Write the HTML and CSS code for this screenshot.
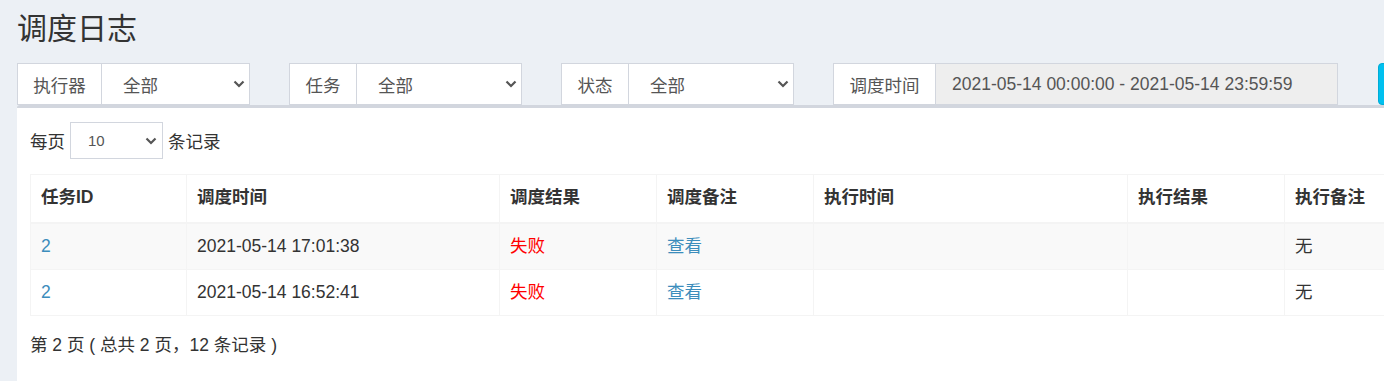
FILE: index.html
```html
<!DOCTYPE html>
<html>
<head>
    <meta charset="UTF-8">
    <title>调度日志</title>
    <link rel="stylesheet" href="styles.css">
</head>
<body>

<section class="content-header">
    <h1>调度日志</h1>
</section>

<section class="content">
    <div class="filter-row">
        <div class="input-group">
            <span class="addon addon-3">执行器</span>
            <div class="select">
                <span>全部</span>
                <svg class="caret" width="12" height="8" viewBox="0 0 12 8"><path d="M1.5 1.5 L6 6 L10.5 1.5" fill="none" stroke="#555" stroke-width="2.2"/></svg>
            </div>
        </div>
        <div class="input-group">
            <span class="addon addon-2">任务</span>
            <div class="select">
                <span>全部</span>
                <svg class="caret" width="12" height="8" viewBox="0 0 12 8"><path d="M1.5 1.5 L6 6 L10.5 1.5" fill="none" stroke="#555" stroke-width="2.2"/></svg>
            </div>
        </div>
        <div class="input-group">
            <span class="addon addon-2">状态</span>
            <div class="select">
                <span>全部</span>
                <svg class="caret" width="12" height="8" viewBox="0 0 12 8"><path d="M1.5 1.5 L6 6 L10.5 1.5" fill="none" stroke="#555" stroke-width="2.2"/></svg>
            </div>
        </div>
        <div class="input-group input-group-wide">
            <span class="addon addon-4">调度时间</span>
            <div class="date-input">2021-05-14 00:00:00 - 2021-05-14 23:59:59</div>
        </div>
        <button class="btn-search" aria-label="搜索"></button>
    </div>

    <div class="box">
        <div class="length">
            <span>每页</span>
            <div class="select select-sm">
                <span>10</span>
                <svg class="caret" width="12" height="8" viewBox="0 0 12 8"><path d="M1.5 1.5 L6 6 L10.5 1.5" fill="none" stroke="#555" stroke-width="2.2"/></svg>
            </div>
            <span>条记录</span>
        </div>

        <table class="log-table">
            <colgroup>
                <col class="w-id"><col class="w-l"><col class="w-s"><col class="w-s"><col class="w-xl"><col class="w-s"><col class="w-s">
            </colgroup>
            <thead>
                <tr>
                    <th>任务ID</th>
                    <th>调度时间</th>
                    <th>调度结果</th>
                    <th>调度备注</th>
                    <th>执行时间</th>
                    <th>执行结果</th>
                    <th>执行备注</th>
                </tr>
            </thead>
            <tbody>
                <tr>
                    <td><a href="#">2</a></td>
                    <td>2021-05-14 17:01:38</td>
                    <td class="fail">失败</td>
                    <td><a href="#">查看</a></td>
                    <td></td>
                    <td></td>
                    <td>无</td>
                </tr>
                <tr>
                    <td><a href="#">2</a></td>
                    <td>2021-05-14 16:52:41</td>
                    <td class="fail">失败</td>
                    <td><a href="#">查看</a></td>
                    <td></td>
                    <td></td>
                    <td>无</td>
                </tr>
            </tbody>
        </table>

        <div class="info">第 2 页 ( 总共 2 页，12 条记录 )</div>
    </div>
</section>

</body>
</html>
```

FILE: styles.css
```css
body {
    margin: 0;
    background: #ecf0f5;
    font-family: "Liberation Sans", "Noto Sans CJK SC", sans-serif;
    font-size: 17.5px;
    color: #333;
    overflow: hidden;
}

.content-header {
    padding: 12px 17px 0;
}
.content-header h1 {
    margin: 0;
    font-size: 30px;
    font-weight: normal;
    line-height: 34px;
    color: #333;
}

.content {
    padding: 17px 0 0 17px;
}

/* filter bar */
.filter-row {
    display: flex;
    gap: 39px;
    width: max-content;
}
.input-group {
    display: flex;
    width: 233px;
    height: 42px;
    color: #555;
}
.input-group-wide {
    width: 505px;
}
.addon {
    box-sizing: border-box;
    flex: none;
    display: flex;
    align-items: center;
    justify-content: center;
    background: #fff;
    border: 1px solid #d2d6de;
    border-right: none;
}
.addon-3 { width: 84px; }
.addon-2 { width: 67px; }
.addon-4 { width: 102px; }

.select {
    box-sizing: border-box;
    flex: 1;
    display: flex;
    align-items: center;
    justify-content: space-between;
    padding: 0 4px 0 21px;
    background: #fff;
    border: 1px solid #d2d6de;
    color: #555;
}
.caret {
    display: block;
}
.date-input {
    box-sizing: border-box;
    flex: 1;
    display: flex;
    align-items: center;
    padding-left: 16px;
    background: #eee;
    border: 1px solid #d2d6de;
    color: #555;
}
.btn-search {
    flex: none;
    width: 80px;
    height: 42px;
    margin-left: 1px;
    background: #00c0ef;
    border: 1px solid #00acd6;
    border-radius: 4px;
}

/* box */
.box {
    width: 1600px;
    background: #fff;
    border-top: 3px solid #d2d6de;
    border-radius: 3px 0 0 0;
    padding: 14px 13px 30px;
}

.length {
    display: flex;
    align-items: center;
    gap: 5px;
    height: 37px;
}
.select-sm {
    flex: none;
    width: 93px;
    height: 37px;
    padding: 0 5px 0 17px;
    font-size: 15px;
}

.log-table {
    margin-top: 15px;
    border-collapse: collapse;
    table-layout: fixed;
    width: 1411px;
    border: 1px solid #f4f4f4;
}
.w-id { width: 156px; }
.w-s { width: 157px; }
.w-l { width: 313px; }
.w-xl { width: 314px; }
.log-table th, .log-table td {
    padding: 10px;
    line-height: 25px;
    text-align: left;
    border: 1px solid #f4f4f4;
    white-space: nowrap;
}
.log-table th {
    font-weight: bold;
    padding-bottom: 12px;
    border-bottom-width: 2px;
}
.log-table tbody tr:nth-child(odd) {
    background: #f9f9f9;
}
.log-table a {
    color: #3c8dbc;
    text-decoration: none;
}
.fail {
    color: red;
}

.info {
    padding-top: 17px;
    line-height: 25px;
}
```
